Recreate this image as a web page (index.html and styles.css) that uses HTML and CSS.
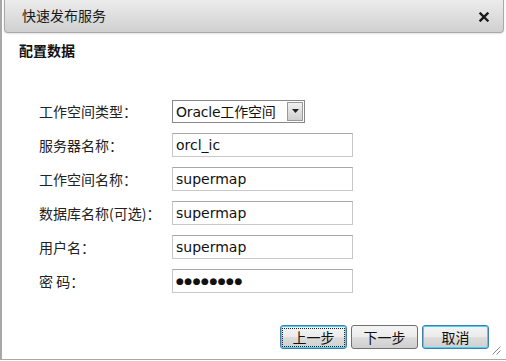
FILE: index.html
```html
<!DOCTYPE html>
<html lang="zh">
<head>
<meta charset="utf-8">
<link rel="stylesheet" href="styles.css">
</head>
<body>
<div class="dialog">
  <div class="titlebar">
    <span class="title">快速发布服务</span>
    <span class="close"><svg width="10" height="10" viewBox="0 0 10 10"><path d="M1.5 1.5L8.5 8.5M8.5 1.5L1.5 8.5" stroke="#1a1a1a" stroke-width="2.4" stroke-linecap="square"/></svg></span>
  </div>
  <div class="content">
    <h2 class="section">配置数据</h2>
    <div class="form">
      <label class="lbl">工作空间类型：</label>
      <div class="select"><span class="sel-text">Oracle工作空间</span><span class="sel-btn"><svg width="7" height="4" viewBox="0 0 7 4"><path d="M0 0h7L3.5 4z" fill="#222"/></svg></span></div>
      <label class="lbl">服务器名称：</label>
      <div class="input">orcl_ic</div>
      <label class="lbl">工作空间名称：</label>
      <div class="input">supermap</div>
      <label class="lbl">数据库名称(可选)：</label>
      <div class="input">supermap</div>
      <label class="lbl">用户名：</label>
      <div class="input">supermap</div>
      <label class="lbl">密&nbsp;码：</label>
      <div class="input pwd">●●●●●●●●</div>
    </div>
    <div class="buttons">
      <button class="btn focus"><span class="btn-in">上一步</span></button>
      <button class="btn"><span class="btn-in">下一步</span></button>
      <button class="btn active"><span class="btn-in">取消</span></button>
    </div>
  </div>
  <div class="grip"><svg width="10" height="10" viewBox="0 0 10 10"><path d="M9.5 1.5L1.5 9.5M9.5 5.5L5.5 9.5" stroke="#8a8a8a" stroke-width="1"/></svg></div>
</div>
</body>
</html>
```
FILE: styles.css
```css
html, body {
  margin: 0;
  padding: 0;
  background: #fff;
}
body {
  width: 506px;
  height: 361px;
  overflow: hidden;
  font-family: "DejaVu Sans", Verdana, "Noto Sans CJK SC", sans-serif;
  color: #222;
}
.dialog {
  position: relative;
  box-sizing: border-box;
  width: 506px;
  height: 360px;
  border-left: 2px solid #a8a8a8;
  border-bottom: 1px solid #a8a8a8;
  padding: 0 2px 0 2px;
}
.titlebar {
  box-sizing: border-box;
  height: 33px;
  display: flex;
  align-items: center;
  justify-content: space-between;
  padding: 0 14px 0 17px;
  background: linear-gradient(#ececec, #d0d0d0);
  border: 1px solid #a9a9a9;
  border-top: none;
  border-radius: 0 0 4px 4px;
  box-shadow: 0 1px 2px rgba(0,0,0,0.12);
}
.title {
  font-family: "Noto Sans CJK SC", sans-serif;
  font-size: 14px;
  color: #1a1a1a;
  margin-top: -2px;
}
.close {
  line-height: 0;
  margin-top: 1px;
}
.content {
  padding: 0 0 0 15px;
}
.section {
  margin: 7px 0 0 0;
  font-family: "Noto Sans CJK SC", sans-serif;
  font-size: 14px;
  font-weight: bold;
  line-height: 20px;
  color: #111;
}
.form {
  display: grid;
  grid-template-columns: 133px 181px;
  grid-auto-rows: 24px;
  row-gap: 10px;
  align-items: center;
  margin: 39px 0 0 20px;
}
.lbl {
  font-family: "Noto Sans CJK SC", sans-serif;
  font-size: 14px;
  color: #222;
  line-height: 24px;
  margin-top: -1px;
}
.input {
  box-sizing: border-box;
  height: 24px;
  border: 1px solid #c8c8c8;
  border-top-color: #a8a8a8;
  padding: 0 3px;
  font-size: 14px;
  line-height: 22px;
  color: #111;
}
.pwd {
  font-size: 9px;
  letter-spacing: 0.5px;
}
.select {
  box-sizing: border-box;
  width: 133px;
  height: 23px;
  display: flex;
  align-items: center;
  border: 1px solid #888;
  padding: 0 0 0 3px;
  justify-content: space-between;
}
.sel-text {
  font-size: 14px;
  color: #111;
  font-family: "DejaVu Sans", "Noto Sans CJK SC", sans-serif;
  white-space: nowrap;
  letter-spacing: -0.2px;
}
.sel-btn {
  box-sizing: border-box;
  width: 16px;
  height: 19px;
  margin-right: 1px;
  display: flex;
  align-items: center;
  justify-content: center;
  background: linear-gradient(#f0f0f0, #cfcfcf);
  border: 1px solid #999;
}
.buttons {
  display: flex;
  justify-content: flex-end;
  gap: 4px;
  margin: 32px 15px 0 0;
}
.btn {
  box-sizing: border-box;
  width: 67px;
  height: 24px;
  padding: 2px;
  border: 1px solid #707070;
  border-radius: 3px;
  background: linear-gradient(#f4f4f4 0%, #ebebeb 50%, #dddddd 51%, #cfcfcf 100%);
  font-family: "Noto Sans CJK SC", sans-serif;
  font-size: 14px;
  color: #111;
  display: flex;
  align-items: center;
  justify-content: center;
}
.btn-in {
  display: block;
  width: 100%;
  line-height: 17px;
  text-align: center;
}
.btn.focus {
  border-color: #3c7fb1;
  box-shadow: inset 0 0 0 1px #48d1f5;
}
.btn.focus .btn-in {
  outline: 1px dotted #222;
}
.btn.active {
  border-color: #3c7fb1;
  box-shadow: inset 0 0 0 1px #48d1f5;
}
.grip {
  position: absolute;
  right: 5px;
  bottom: 4px;
  width: 10px;
  height: 10px;
  line-height: 0;
}
```
